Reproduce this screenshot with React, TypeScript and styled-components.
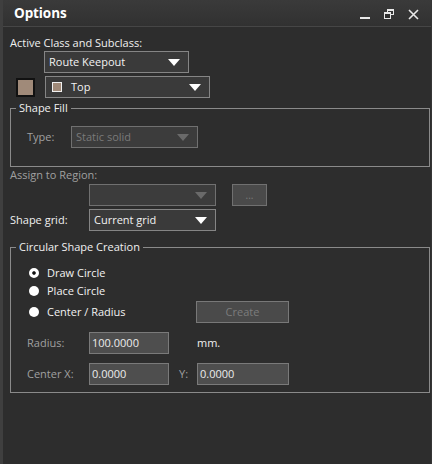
import styled, { createGlobalStyle } from 'styled-components';

const GlobalStyle = createGlobalStyle`
    html, body {
        margin: 0;
        padding: 0;
        background: #2d2d2d;
    }
    body {
        font-family: "Open Sans", "Noto Sans", sans-serif;
        font-size: 11px;
        line-height: 16px;
        color: #f0f0f0;
    }
`;

const SWATCH = '#a08a79';

const Arrow = ({ disabled }: { disabled?: boolean }) => (
    <svg width="12" height="7" viewBox="0 0 12 7">
        <polygon points="0,0 12,0 6,7" fill={disabled ? '#6a6a6a' : '#ffffff'} />
    </svg>
);

const Select = ({ value, width, disabled, swatch }: { value?: string; width: number; disabled?: boolean; swatch?: boolean }) => (
    <SelectBox $width={width} $disabled={disabled}>
        {swatch && <MiniSwatch />}
        <SelectText>{value}</SelectText>
        <Arrow disabled={disabled} />
    </SelectBox>
);

const Radio = ({ label, checked }: { label: string; checked?: boolean }) => (
    <RadioLabel>
        <RadioDot $checked={checked} />
        {label}
    </RadioLabel>
);

const App = () => {
    return (
        <>
            <GlobalStyle />
            <Window>
                <TitleBar>
                    <Title>Options</Title>
                    <TitleButtons>
                        <svg width="11" height="11" viewBox="0 0 11 11">
                            <rect x="0" y="8" width="10" height="2" fill="#e8e8e8" />
                        </svg>
                        <svg width="11" height="11" viewBox="0 0 11 11">
                            <rect x="3.5" y="0.5" width="6" height="5" fill="none" stroke="#e8e8e8" />
                            <rect x="3.5" y="0.5" width="6" height="1.5" fill="#e8e8e8" />
                            <rect x="0.5" y="3.5" width="6" height="6" fill="#2f2f2f" stroke="#e8e8e8" />
                            <rect x="0.5" y="3.5" width="6" height="1.5" fill="#e8e8e8" />
                        </svg>
                        <svg width="11" height="11" viewBox="0 0 11 11">
                            <path d="M1 1 L10 10 M10 1 L1 10" stroke="#e8e8e8" strokeWidth="1.6" />
                        </svg>
                    </TitleButtons>
                </TitleBar>

                <Body>
                    <Label>Active Class and Subclass:</Label>
                    <Row $indent={34} $top={0}>
                        <Select value="Route Keepout" width={145} />
                    </Row>
                    <Row $indent={6} $top={3} $gap={10}>
                        <ColorSwatch />
                        <Select value="Top" width={165} swatch />
                    </Row>

                    <Group $top={2}>
                        <Legend>Shape Fill</Legend>
                        <GroupRow $indent={16} $top={10}>
                            <FieldLabel $width={44} $muted>Type:</FieldLabel>
                            <Select value="Static solid" width={127} disabled />
                        </GroupRow>
                        <Spacer $h={18} />
                    </Group>

                    <Label $muted>Assign to Region:</Label>
                    <Row $indent={79} $top={1} $gap={16}>
                        <Select width={127} disabled />
                        <SmallButton>...</SmallButton>
                    </Row>
                    <Row $top={3}>
                        <FieldLabel $width={79}>Shape grid:</FieldLabel>
                        <Select value="Current grid" width={127} />
                    </Row>

                    <Group $top={8}>
                        <Legend>Circular Shape Creation</Legend>
                        <GroupRow $indent={18} $top={9}>
                            <Radio label="Draw Circle" checked />
                        </GroupRow>
                        <GroupRow $indent={18}>
                            <Radio label="Place Circle" />
                        </GroupRow>
                        <GroupRow $indent={18} $top={1}>
                            <RadioCol>
                                <Radio label="Center / Radius" />
                            </RadioCol>
                            <Button>Create</Button>
                        </GroupRow>
                        <GroupRow $indent={16} $top={9}>
                            <FieldLabel $width={62} $muted>Radius:</FieldLabel>
                            <Input $width={80}>100.0000</Input>
                            <Unit>mm.</Unit>
                        </GroupRow>
                        <GroupRow $indent={16} $top={9}>
                            <FieldLabel $width={62} $muted>Center X:</FieldLabel>
                            <Input $width={80}>0.0000</Input>
                            <FieldLabel $width={28} $muted $pad={10}>Y:</FieldLabel>
                            <Input $width={92}>0.0000</Input>
                        </GroupRow>
                        <Spacer $h={7} />
                    </Group>
                </Body>
            </Window>
        </>
    );
};

export default App;

const Window = styled.div`
    width: 432px;
    height: 464px;
    box-sizing: border-box;
    background: #2d2d2d;
    border-left: 3px solid #3f3f3f;
    border-right: 1px solid #353535;
    overflow: hidden;
`;

const TitleBar = styled.div`
    height: 27px;
    box-sizing: border-box;
    display: flex;
    align-items: center;
    justify-content: space-between;
    padding: 0 12px 0 11px;
    background: linear-gradient(#3a3a3a, #313131);
    border-bottom: 1px solid #464646;
`;

const Title = styled.div`
    font-size: 13.5px;
    font-weight: 700;
    color: #ffffff;
    letter-spacing: -0.1px;
`;

const TitleButtons = styled.div`
    display: flex;
    gap: 13px;
    align-items: center;
    padding-top: 2px;
`;

const Body = styled.div`
    padding: 8px 1px 0 7px;
`;

const Label = styled.div<{ $muted?: boolean }>`
    height: 16px;
    color: ${p => (p.$muted ? '#a0a0a0' : '#f0f0f0')};
    white-space: nowrap;
`;

const Row = styled.div<{ $indent?: number; $top?: number; $gap?: number }>`
    display: flex;
    align-items: center;
    gap: ${p => p.$gap ?? 0}px;
    margin-top: ${p => p.$top ?? 0}px;
    padding-left: ${p => p.$indent ?? 0}px;
`;

const GroupRow = styled(Row)`
    min-height: 18px;
`;

const SelectBox = styled.div<{ $width: number; $disabled?: boolean }>`
    width: ${p => p.$width}px;
    height: 22px;
    box-sizing: border-box;
    display: flex;
    align-items: center;
    padding: 0 8px 0 4px;
    background: ${p => (p.$disabled ? '#3c3c3c' : '#3a3a3a')};
    border: 1px solid ${p => (p.$disabled ? '#707070' : '#858585')};
    color: ${p => (p.$disabled ? '#7a7a7a' : '#f2f2f2')};
`;

const SelectText = styled.span`
    flex: 1;
    white-space: nowrap;
`;

const MiniSwatch = styled.span`
    width: 8px;
    height: 8px;
    margin-left: 2px;
    margin-right: 9px;
    background: ${SWATCH};
    border: 1px solid #f0f0f0;
`;

const ColorSwatch = styled.div`
    width: 15px;
    height: 15px;
    background: ${SWATCH};
    border: 2px solid #111111;
`;

const Group = styled.fieldset<{ $top?: number }>`
    margin: ${p => p.$top ?? 0}px 0 0 0;
    padding: 0;
    min-width: 0;
    border: 1px solid #8a8a8a;
`;

const Legend = styled.legend`
    margin-left: 5px;
    padding: 0 3px;
    height: 16px;
    color: #f0f0f0;
`;

const Spacer = styled.div<{ $h: number }>`
    height: ${p => p.$h}px;
`;

const FieldLabel = styled.div<{ $width: number; $muted?: boolean; $pad?: number }>`
    width: ${p => p.$width}px;
    padding-left: ${p => p.$pad ?? 0}px;
    box-sizing: border-box;
    color: ${p => (p.$muted ? '#a0a0a0' : '#f0f0f0')};
    white-space: nowrap;
`;

const SmallButton = styled.div`
    width: 35px;
    height: 22px;
    box-sizing: border-box;
    display: flex;
    align-items: center;
    justify-content: center;
    background: #4a4a4a;
    border: 1px solid #707070;
    color: #7a7a7a;
    font-size: 10px;
`;

const RadioCol = styled.div`
    width: 167px;
`;

const RadioLabel = styled.label`
    display: flex;
    align-items: center;
    gap: 8px;
    color: #f2f2f2;
    white-space: nowrap;
`;

const RadioDot = styled.span<{ $checked?: boolean }>`
    width: 10px;
    height: 10px;
    box-sizing: border-box;
    border-radius: 50%;
    background: #ffffff;
    border: ${p => (p.$checked ? '3px solid #ffffff' : 'none')};
    box-shadow: ${p => (p.$checked ? 'inset 0 0 0 2px #111111' : 'none')};
`;

const Button = styled.div`
    width: 93px;
    height: 22px;
    box-sizing: border-box;
    display: flex;
    align-items: center;
    justify-content: center;
    background: #4a4a4a;
    border: 1px solid #787878;
    color: #7c7c7c;
`;

const Input = styled.div<{ $width: number }>`
    width: ${p => p.$width}px;
    height: 22px;
    box-sizing: border-box;
    display: flex;
    align-items: center;
    padding-left: 2px;
    background: #4e4e4e;
    border: 1px solid #7a7a7a;
    color: #ececec;
`;

const Unit = styled.div`
    margin-left: 28px;
    color: #f0f0f0;
`;
